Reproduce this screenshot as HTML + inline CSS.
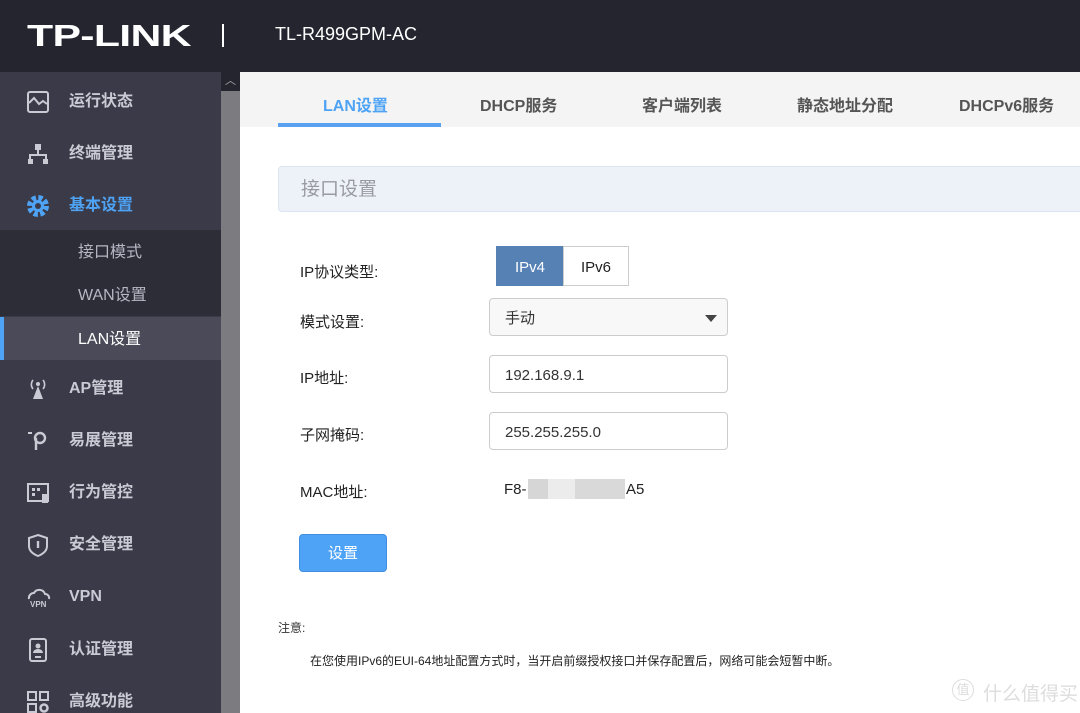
<!DOCTYPE html>
<html><head><meta charset="utf-8"><style>
*{margin:0;padding:0;box-sizing:border-box}
html,body{width:1080px;height:713px;overflow:hidden}
body{background:#fff;font-family:"Liberation Sans","Noto Sans CJK SC",sans-serif;position:relative}
.hdr{position:absolute;left:0;top:0;width:1080px;height:72px;background:#252530}
.logo{position:absolute;left:27px;top:21px;line-height:30px;color:#fff;font-size:31px;font-weight:bold;letter-spacing:-0.5px;transform:scaleX(1.38);transform-origin:left}
.sep{position:absolute;left:222px;top:24px;width:2px;height:23px;background:#fff}
.model{position:absolute;left:275px;top:24px;color:#fff;font-size:18px}
.side{position:absolute;left:0;top:72px;width:221px;height:641px;background:#3a3a48}
.item{position:absolute;left:0;width:221px;height:52px;color:#c9cad4;font-size:16px;font-weight:bold;line-height:56px}
.item span{position:absolute;left:69px}
.item svg{position:absolute;left:26px;top:16px}
.sub{position:absolute;left:0;width:221px;height:43px;background:#2d2d38;color:#b5b7c2;font-size:16px;line-height:46px}
.sub span{position:absolute;left:78px}
.scroll{position:absolute;left:221px;top:72px;width:19px;height:641px;background:#7b7b80}
.tabs{position:absolute;left:240px;top:72px;width:840px;height:55px;background:#f4f4f4}
.tab{position:absolute;top:20px;font-size:16px;font-weight:bold;color:#555}
.lbl{position:absolute;left:300px;font-size:15px;color:#222}
.inp{position:absolute;left:489px;width:239px;height:38px;border:1px solid #ccc;border-radius:4px;font-size:15px;color:#333;padding-left:15px;line-height:40px}
</style></head><body>
<div class="hdr"><div class="logo">TP-LINK</div><div class="sep"></div><div class="model">TL-R499GPM-AC</div></div>
<div class="side">
<div class="item" style="top:2px"><svg width="24" height="24"><rect x="2" y="2" width="20" height="20" rx="2" fill="none" stroke="#c9cad4" stroke-width="2"/><path d="M3 13l5-5 5 6 4-3 4 3" fill="none" stroke="#c9cad4" stroke-width="2"/></svg><span>运行状态</span></div>
<div class="item" style="top:54px"><svg width="24" height="24"><rect x="9" y="2" width="6" height="6" fill="#c9cad4"/><path d="M12 8v5M4 18v-5h16v5" fill="none" stroke="#c9cad4" stroke-width="2"/><rect x="2" y="17" width="5" height="5" fill="#c9cad4"/><rect x="17" y="17" width="5" height="5" fill="#c9cad4"/></svg><span>终端管理</span></div>
<div class="item" style="top:106px;color:#4ea3f5"><svg width="24" height="24"><circle cx="12" cy="12" r="8" fill="none" stroke="#4ea3f5" stroke-width="6" stroke-dasharray="4 2.3"/><circle cx="12" cy="12" r="6" fill="#4ea3f5"/><circle cx="12" cy="12" r="3" fill="#3a3a48"/></svg><span>基本设置</span></div>
<div class="sub" style="top:158px"><span>接口模式</span></div>
<div class="sub" style="top:201px"><span>WAN设置</span></div>
<div class="sub" style="top:245px;background:#4a4a58;color:#fff"><span>LAN设置</span><div style="position:absolute;left:0;top:0;width:4px;height:43px;background:#4ea3f5"></div></div>
<div class="item" style="top:289px"><svg width="24" height="24"><path d="M12 9l5 13H7z" fill="#c9cad4"/><circle cx="12" cy="7" r="2" fill="#c9cad4"/><path d="M7 3a7 7 0 0 0 0 9M17 3a7 7 0 0 1 0 9" fill="none" stroke="#c9cad4" stroke-width="1.6"/></svg><span>AP管理</span></div>
<div class="item" style="top:341px"><svg width="24" height="24"><path d="M2 4h4" stroke="#c9cad4" stroke-width="2"/><circle cx="14" cy="9" r="5" fill="none" stroke="#c9cad4" stroke-width="2.4"/><path d="M10 9v12" stroke="#c9cad4" stroke-width="2.4"/></svg><span>易展管理</span></div>
<div class="item" style="top:393px"><svg width="24" height="24"><rect x="2" y="3" width="20" height="17" fill="none" stroke="#c9cad4" stroke-width="2"/><rect x="6" y="7" width="3" height="3" fill="#c9cad4"/><rect x="11" y="7" width="3" height="3" fill="#c9cad4"/><rect x="6" y="12" width="3" height="3" fill="#c9cad4"/><path d="M16 13h6v9h-6z" fill="#c9cad4"/></svg><span>行为管控</span></div>
<div class="item" style="top:445px"><svg width="24" height="24"><path d="M12 2l9 3v8c0 5-4 8-9 10-5-2-9-5-9-10V5z" fill="none" stroke="#c9cad4" stroke-width="2"/><path d="M12 8v7" stroke="#c9cad4" stroke-width="2.4"/></svg><span>安全管理</span></div>
<div class="item" style="top:497px"><svg width="26" height="24"><path d="M3 14a5 5 0 0 1 5-6 6 6 0 0 1 11 1 4 4 0 0 1 4 5" fill="none" stroke="#c9cad4" stroke-width="2"/><text x="4" y="22" font-size="8" font-weight="bold" fill="#c9cad4" font-family="Liberation Sans">VPN</text></svg><span>VPN</span></div>
<div class="item" style="top:550px"><svg width="24" height="24"><rect x="4" y="1" width="16" height="22" rx="2" fill="none" stroke="#c9cad4" stroke-width="2"/><circle cx="12" cy="8" r="2.5" fill="#c9cad4"/><path d="M7 15a5 4 0 0 1 10 0z" fill="#c9cad4"/><path d="M9 19h6" stroke="#c9cad4" stroke-width="2"/></svg><span>认证管理</span></div>
<div class="item" style="top:602px"><svg width="24" height="24"><rect x="2" y="2" width="8" height="8" fill="none" stroke="#c9cad4" stroke-width="2"/><rect x="14" y="2" width="8" height="8" fill="none" stroke="#c9cad4" stroke-width="2"/><rect x="2" y="14" width="8" height="8" fill="none" stroke="#c9cad4" stroke-width="2"/><circle cx="18" cy="18" r="3.5" fill="none" stroke="#c9cad4" stroke-width="2.5"/></svg><span>高级功能</span></div>
</div>
<div class="scroll"><div style="width:19px;height:19px;background:#252530;color:#aaa;font-size:11px;text-align:center;line-height:19px">︿</div></div>
<div class="tabs">
<div class="tab" style="left:83px;color:#4ea3f5">LAN设置</div>
<div class="tab" style="left:240px">DHCP服务</div>
<div class="tab" style="left:402px">客户端列表</div>
<div class="tab" style="left:557px">静态地址分配</div>
<div class="tab" style="left:719px">DHCPv6服务</div>
<div style="position:absolute;left:38px;top:51px;width:163px;height:4px;background:#5aa0f0"></div>
</div>
<div style="position:absolute;left:278px;top:166px;width:810px;height:46px;background:#edf2f9;border:1px solid #dbe5f0;border-radius:4px;color:#9a9aa2;font-size:19px;line-height:46px;padding-left:22px">接口设置</div>
<div class="lbl" style="top:261px">IP协议类型:</div>
<div style="position:absolute;left:496px;top:246px;width:68px;height:40px;background:#5581b5;color:#fff;font-size:15px;text-align:center;line-height:43px">IPv4</div>
<div style="position:absolute;left:563px;top:246px;width:66px;height:40px;border:1px solid #ccc;color:#222;font-size:15px;text-align:center;line-height:41px">IPv6</div>
<div class="lbl" style="top:311px">模式设置:</div>
<div class="inp" style="top:298px;background:#f8f8f8">手动<div style="position:absolute;right:10px;top:16px;border-left:6px solid transparent;border-right:6px solid transparent;border-top:7px solid #444"></div></div>
<div class="lbl" style="top:367px">IP地址:</div>
<div class="inp" style="top:355px">192.168.9.1</div>
<div class="lbl" style="top:424px">子网掩码:</div>
<div class="inp" style="top:412px">255.255.255.0</div>
<div class="lbl" style="top:481px">MAC地址:</div>
<div style="position:absolute;left:504px;top:481px;font-size:15px;color:#222">F8-</div>
<div style="position:absolute;left:528px;top:479px;width:20px;height:20px;background:#d6d6d6"></div>
<div style="position:absolute;left:548px;top:479px;width:27px;height:20px;background:#ececec"></div>
<div style="position:absolute;left:575px;top:479px;width:50px;height:20px;background:#d9d9d9"></div>
<div style="position:absolute;left:626px;top:481px;font-size:15px;color:#222">A5</div>
<div style="position:absolute;left:299px;top:534px;width:88px;height:38px;background:#4ea3f7;border:1px solid #3f8ee0;border-radius:4px;color:#fff;font-size:15px;text-align:center;line-height:38px">设置</div>
<div style="position:absolute;left:278px;top:619px;font-size:12px;color:#333">注意:</div>
<div style="position:absolute;left:310px;top:652px;font-size:12px;color:#222">在您使用IPv6的EUI-64地址配置方式时，当开启前缀授权接口并保存配置后，网络可能会短暂中断。</div>
<div style="position:absolute;left:952px;top:679px;width:22px;height:22px;border:1.5px solid #ddd;border-radius:50%;color:#ddd;font-size:13px;text-align:center;line-height:20px">值</div>
<div style="position:absolute;left:983px;top:679px;font-size:19px;color:#ddd">什么值得买</div>
</body></html>
